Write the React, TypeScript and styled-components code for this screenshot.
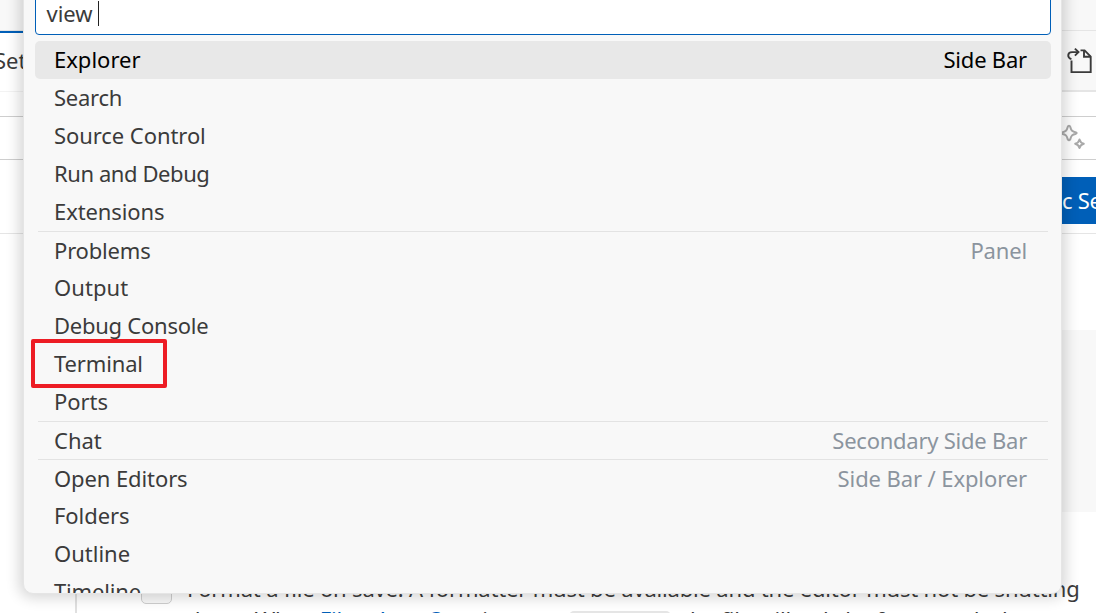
import React from "react";
import styled, { createGlobalStyle } from "styled-components";

const Global = createGlobalStyle`
  * { box-sizing: border-box; }
  body { margin: 0; overflow: hidden; }
`;

const Screen = styled.div`
  position: relative;
  width: 1096px;
  height: 613px;
  overflow: hidden;
  display: flex;
  flex-direction: column;
  background: #fff;
  color: #3b3b3b;
  font: 22px/36px "Noto Sans", "Open Sans", sans-serif;
  white-space: pre;
`;

/* ---- settings editor behind the palette ---- */

const TitleBar = styled.div`
  flex: none;
  height: 31px;
  background: #f8f8f8;
  border-bottom: 1px solid #e5e5e5;
`;

const TabBar = styled.div`
  flex: none;
  display: flex;
  justify-content: space-between;
  height: 61px;
`;

const Tab = styled.div`
  width: 300px;
  padding: 10px 0 0;
  background: #fff;
  border-top: 2px solid #005fb8;
  border-bottom: 1px solid #f3f3f3;
`;

const TabTitle = styled.span`
  display: block;
  margin-left: -6px;
  line-height: 35px;
`;

const TabActions = styled.div`
  flex: 1;
  display: flex;
  justify-content: flex-end;
  padding: 15px 4px 0 0;
  background: #f8f8f8;
  border-bottom: 2px solid #e5e5e5;
`;

const SearchField = styled.div`
  flex: none;
  display: flex;
  justify-content: flex-end;
  height: 44px;
  margin-top: 24px;
  padding: 7px 9px 0 0;
  border: solid #cecece;
  border-width: 1px 0;
`;

const SyncRow = styled.div`
  flex: none;
  display: flex;
  justify-content: flex-end;
  height: 74px;
  padding-top: 17px;
  border-bottom: 1px solid #e5e5e5;
`;

const SyncButton = styled.div`
  width: 180px;
  height: 47px;
  padding-left: 146px;
  overflow: hidden;
  background: #005fb8;
  color: #fff;
  line-height: 47px;
  letter-spacing: -0.3px;
`;

const FocusedSetting = styled.div`
  flex: none;
  height: 182px;
  margin: 96px 0 0 77px;
  background: #f8f8f8;
`;

const FormatSetting = styled.div`
  flex: none;
  display: flex;
  gap: 15px;
  height: 101px;
  margin-left: 75px;
  padding: 62px 0 0 64px;
  border-left: 2px solid #e0e0e0;
`;

const Checkbox = styled.div`
  flex: none;
  width: 31px;
  height: 30px;
  background: #f8f8f8;
  border: 1px solid #cecece;
  border-radius: 5px;
`;

const Description = styled.div`
  margin-top: -1px;
  line-height: 31px;
  letter-spacing: -0.18px;
`;

const DescriptionLine = styled.div`
  display: flex;
`;

const Link = styled.span`
  color: #005fb8;
`;

const Code = styled.span`
  flex: none;
  width: 102px;
  height: 28px;
  margin: 7px 0 0 3px;
  background: #e5e5e5;
  border-radius: 5px;
`;

/* ---- command palette ---- */

const Palette = styled.div`
  position: absolute;
  top: -20px;
  left: 23px;
  width: 1039px;
  height: 614px;
  overflow: hidden;
  padding: 0 10px 0 11px;
  background: #f8f8f8;
  border: 1px solid #e5e5e5;
  border-radius: 10px;
  box-shadow: 0 0 14px 4px rgba(0, 0, 0, 0.16);
`;

const Query = styled.div`
  display: flex;
  align-items: flex-end;
  height: 54px;
  margin-bottom: 6px;
  padding: 0 0 8px 10.5px;
  background: #fff;
  border: 1px solid #005fb8;
  border-radius: 4px;
  line-height: 26px;
`;

const Caret = styled.span`
  width: 1px;
  height: 25px;
  margin-left: 5.5px;
  background: #222;
`;

const Row = styled.div<{ $selected?: boolean }>`
  display: flex;
  justify-content: space-between;
  height: 38px;
  padding: 0 24px 0 19px;
  border-radius: 5px;
  background: ${(p) => (p.$selected ? "#e8e8e8" : "transparent")};
  color: ${(p) => (p.$selected ? "#000" : "#3b3b3b")};
`;

const SectionRow = styled(Row)`
  margin: 0 3px;
  padding: 0 21px 0 16px;
  border-top: 1px solid #e3e3e3;
  border-radius: 0;
`;

const Label = styled.span<{ $track?: number }>`
  letter-spacing: ${(p) => p.$track ?? 0}px;
`;

const Category = styled(Label)<{ $strong?: boolean }>`
  color: ${(p) => (p.$strong ? "#000" : "#8b949e")};
`;

const Highlight = styled.div`
  position: absolute;
  left: 31px;
  top: 339px;
  width: 136px;
  height: 49px;
  border: 4px solid #ed1c24;
  border-radius: 2px;
`;

type View = { name: string; track?: number; category?: string; catTrack?: number };

const views: View[] = [
  { name: "Explorer", category: "Side Bar", catTrack: -0.2 },
  { name: "Search", track: -0.25 },
  { name: "Source Control", track: -0.07 },
  { name: "Run and Debug", track: -0.42 },
  { name: "Extensions", track: -0.1 },
  { name: "Problems", track: -0.18, category: "Panel", catTrack: -0.15 },
  { name: "Output", track: 0.06 },
  { name: "Debug Console", track: -0.25 },
  { name: "Terminal", track: -0.15 },
  { name: "Ports", track: -0.05 },
  { name: "Chat", category: "Secondary Side Bar", catTrack: -0.24 },
  { name: "Open Editors", track: -0.1, category: "Side Bar / Explorer", catTrack: -0.1 },
  { name: "Folders", track: -0.06 },
  { name: "Outline" },
  { name: "Timeline", track: -0.15 },
];

const GoToFileIcon = () => (
  <svg width="28" height="28" viewBox="0 0 28 28" fill="none" stroke="#3b3b3b" strokeWidth="1.9">
    <path d="M7.5 14.5V26.1H26.7V10.6L20.6 4.4H16.5" />
    <path d="M20 4.5V10.8H26.7" />
    <path d="M7.4 13.2C3 11.6 3.2 6.2 8 6.1H14.3" />
    <path d="M10.9 2.6L14.5 6.1L10.9 9.7" />
  </svg>
);

const SparkleIcon = () => (
  <svg width="28" height="28" viewBox="0 0 28 28" fill="none" stroke="#a9a9a9" strokeWidth="2" strokeLinejoin="round">
    <path d="M10 1.7Q10.9 1.7 11.2 2.7C12.3 6.8 13.2 7.6 17 8.4Q18.4 9 17 9.7C13.2 10.6 12.3 11.4 11.2 15.4Q10 17 8.8 15.4C7.7 11.4 6.8 10.6 3 9.7Q1.6 9 3 8.4C6.8 7.6 7.7 6.8 8.8 2.7Q9.1 1.7 10 1.7Z" />
    <path d="M20.5 15.5C21.2 18.3 21.9 19 24.8 19.8C21.9 20.6 21.2 21.3 20.5 24.1C19.8 21.3 19.1 20.6 16.2 19.8C19.1 19 19.8 18.3 20.5 15.5Z" />
  </svg>
);

export default function App() {
  return (
    <Screen>
      <Global />
      <TitleBar />
      <TabBar>
        <Tab>
          <TabTitle>Set</TabTitle>
        </Tab>
        <TabActions>
          <GoToFileIcon />
        </TabActions>
      </TabBar>
      <SearchField>
        <SparkleIcon />
      </SearchField>
      <SyncRow>
        <SyncButton>c Se</SyncButton>
      </SyncRow>
      <FocusedSetting />
      <FormatSetting>
        <Checkbox />
        <Description>
          <div>Format a file on save. A formatter must be available and the editor must not be shutting</div>
          <DescriptionLine>
            <span>down. When </span>
            <Link>Files: Auto Save</Link>
            <span> is set to </span>
            <Code />
            <span>, the file will only be formatted when</span>
          </DescriptionLine>
        </Description>
      </FormatSetting>

      <Palette>
        <Query>
          view
          <Caret />
        </Query>
        {views.map((v, i) => {
          const Item = v.category && i > 0 ? SectionRow : Row;
          return (
            <Item key={v.name} $selected={i === 0}>
              <Label $track={v.track}>{v.name}</Label>
              {v.category && (
                <Category $track={v.catTrack} $strong={i === 0}>
                  {v.category}
                </Category>
              )}
            </Item>
          );
        })}
      </Palette>
      <Highlight />
    </Screen>
  );
}
